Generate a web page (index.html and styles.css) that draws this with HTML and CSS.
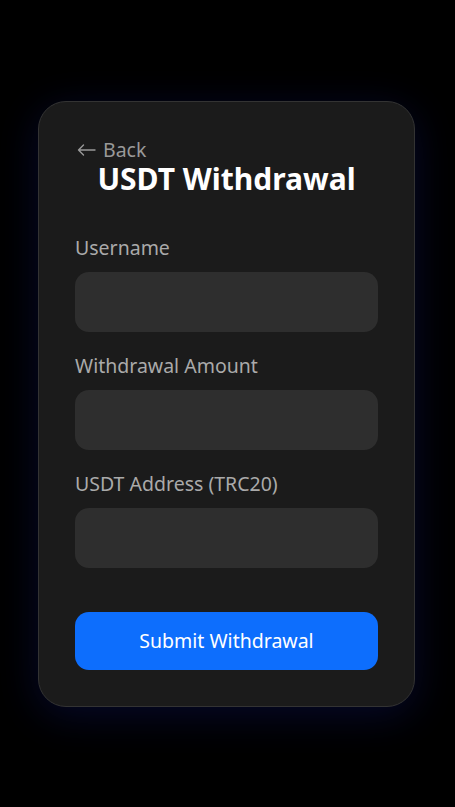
FILE: index.html
```html
<!DOCTYPE html>
<html lang="en">
<head>
    <meta charset="UTF-8">
    <meta name="viewport" content="width=device-width, initial-scale=1.0">
    <title>USDT Withdrawal</title>
    <link rel="stylesheet" href="styles.css">
</head>
<body>
    <div class="page">
        <div class="card">
            <a class="back" href="#">
                <svg class="arrow" width="19" height="12" viewBox="0 0 19 12" fill="none" stroke="#999" stroke-width="1.4" stroke-linecap="round" stroke-linejoin="round">
                    <path d="M18 6H1.5M6.5 1L1.5 6L6.5 11"/>
                </svg>
                Back
            </a>
            <h1>USDT Withdrawal</h1>

            <form class="form" onsubmit="return false;">
                <label for="username">Username</label>
                <input type="text" id="username">

                <label for="amount">Withdrawal Amount</label>
                <input type="number" id="amount">

                <label for="address">USDT Address (TRC20)</label>
                <input type="text" id="address">

                <button type="submit">Submit Withdrawal</button>
            </form>
        </div>
    </div>
</body>
</html>
```

FILE: styles.css
```css
body {
    background-color: #000;
    color: white;
    font-family: 'Noto Sans', 'Open Sans', sans-serif;
    margin: 0;
    padding: 0;
}
.page {
    min-height: 100vh;
    display: flex;
    align-items: center;
    justify-content: center;
    padding-right: 2px;
    box-sizing: border-box;
}
.card {
    width: 303px;
    padding: 36px;
    background-color: #1b1b1b;
    border: 1px solid #333;
    border-radius: 28px;
    box-shadow: 0 8px 40px rgba(20, 30, 140, 0.3);
}
.back {
    display: flex;
    align-items: center;
    gap: 7px;
    color: #999;
    text-decoration: none;
    font-size: 19.5px;
    line-height: 24px;
}
.arrow {
    margin-left: 2px;
}
h1 {
    margin: 0;
    text-align: center;
    font-size: 30px;
    line-height: 34px;
    font-weight: bold;
}
.form {
    display: flex;
    flex-direction: column;
    margin-top: 40px;
}
.form label {
    color: #aaa;
    font-size: 19.5px;
    line-height: 24px;
    margin-bottom: 12px;
}
.form input {
    height: 60px;
    box-sizing: border-box;
    border: none;
    border-radius: 14px;
    background-color: #2e2e2e;
    color: white;
    padding: 0 16px;
    font-size: 18px;
    margin-bottom: 22px;
}
.form input:last-of-type {
    margin-bottom: 44px;
}
.form button {
    height: 58px;
    border: none;
    border-radius: 14px;
    background-color: #0d6efd;
    color: white;
    font-family: inherit;
    font-size: 19.5px;
    cursor: pointer;
}
```
